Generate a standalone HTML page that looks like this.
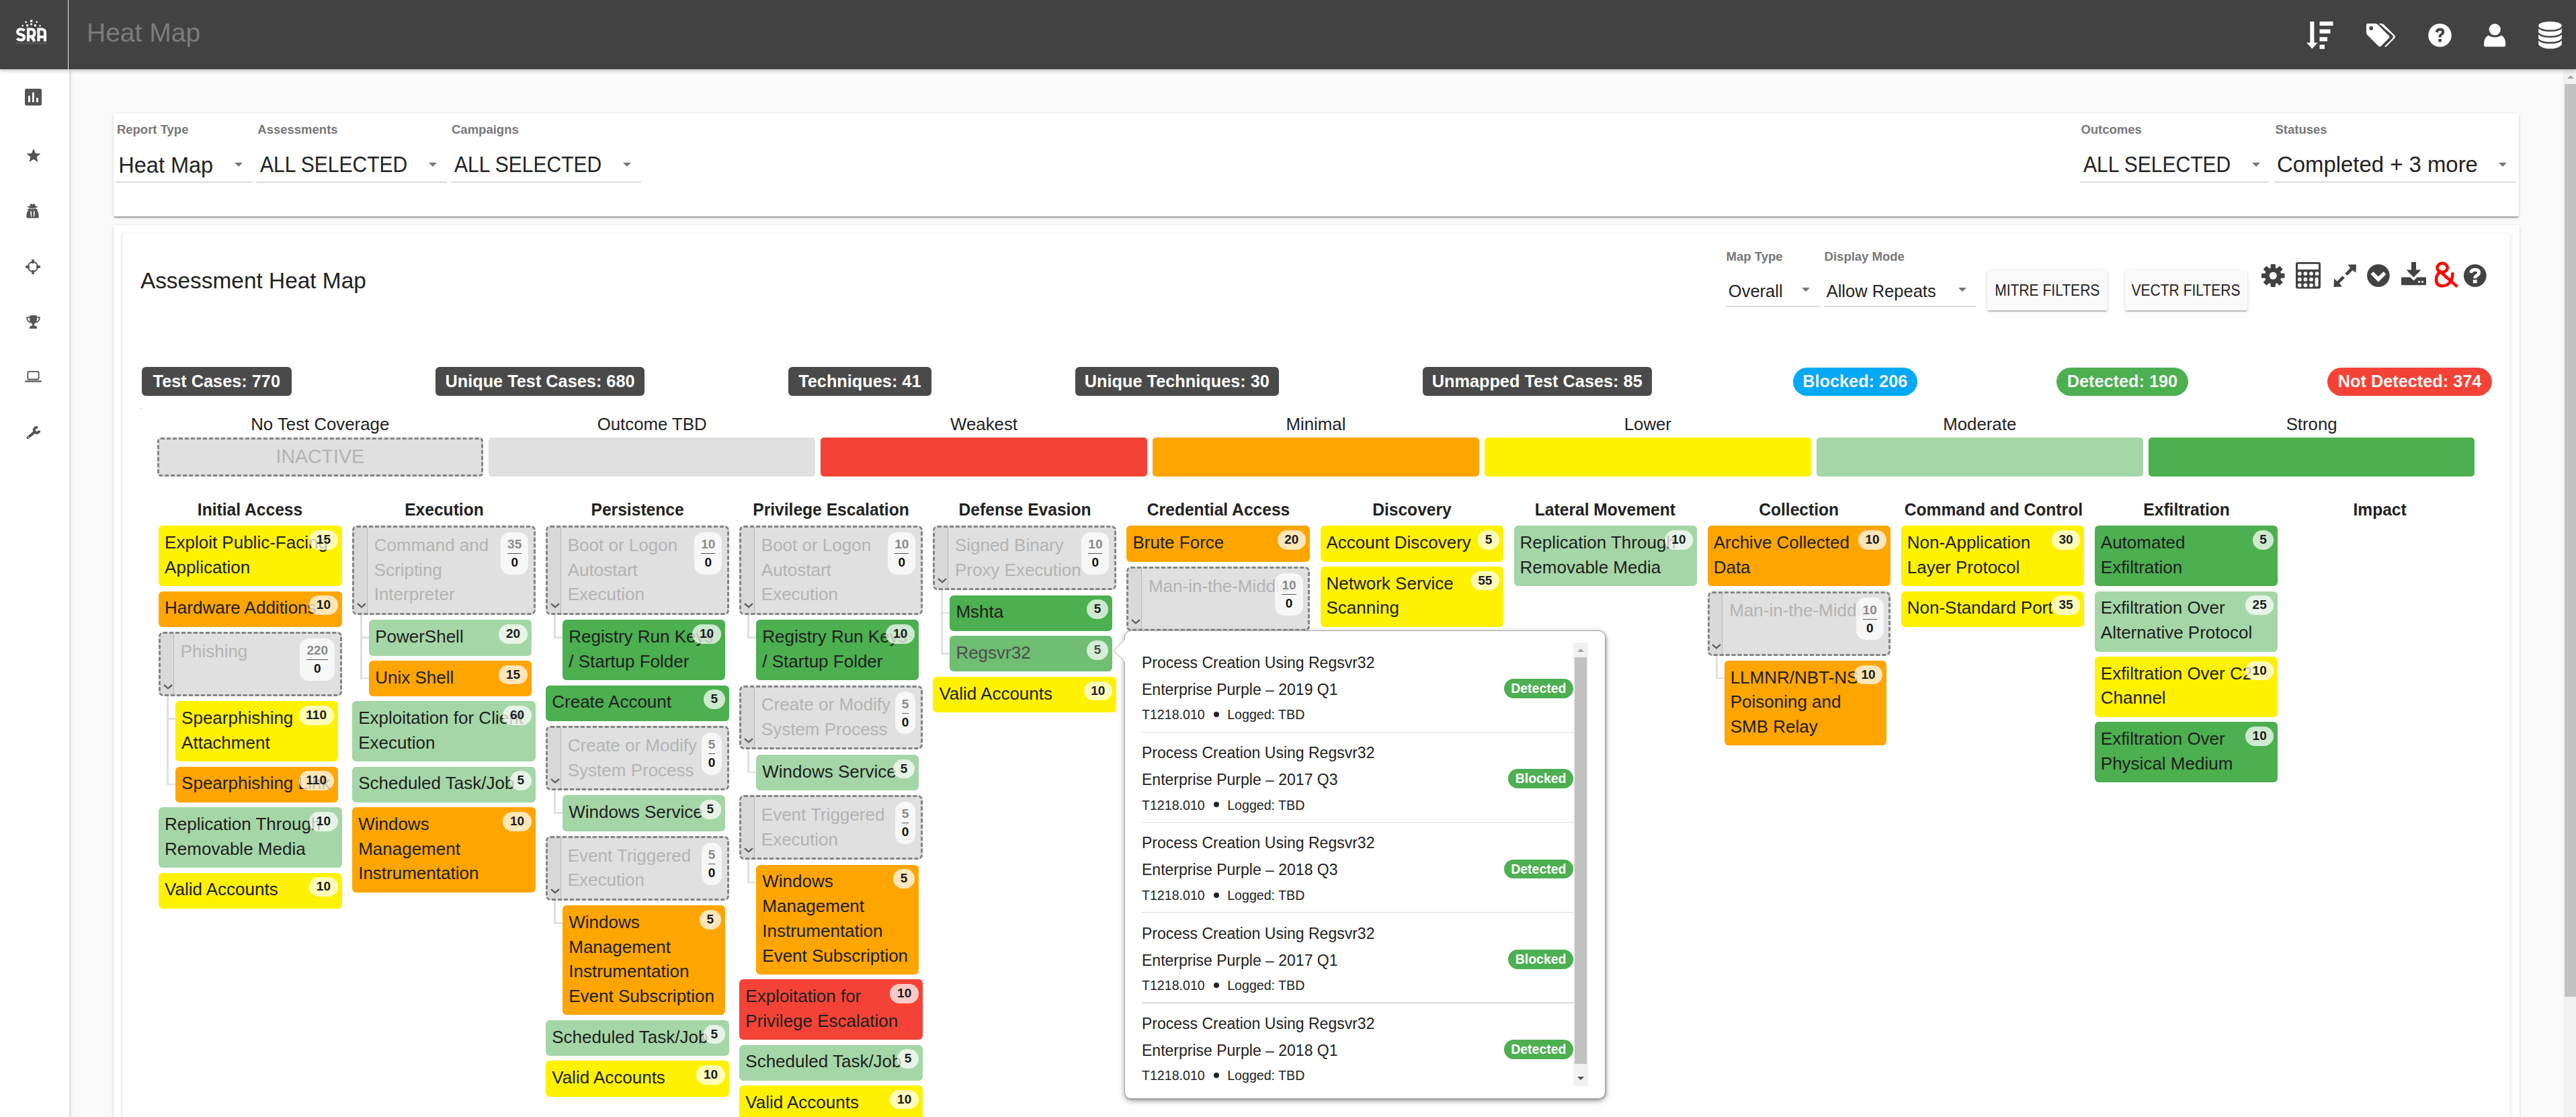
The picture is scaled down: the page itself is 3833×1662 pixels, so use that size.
<!DOCTYPE html><html><head><meta charset="utf-8"><title>Heat Map</title><style>
*{margin:0;padding:0;box-sizing:border-box}
html,body{width:3833px;height:1662px;overflow:hidden;background:#fafafa;font-family:"Liberation Sans",sans-serif;color:#212121}
.abs{position:absolute}
#hdr{position:absolute;left:0;top:0;width:3833px;height:102.5px;background:#424242;z-index:5;box-shadow:0 2px 6px rgba(0,0,0,.25)}
#logo{position:absolute;left:0;top:0;width:102px;height:102.5px;border-right:1.5px solid #e8e8e8}
#title{position:absolute;left:129px;top:-1.7px;line-height:102.5px;font-size:39px;color:#7c7c7c}
#side{position:absolute;left:0;top:102.5px;width:103px;height:1560px;background:#fff;box-shadow:1px 0 5px rgba(0,0,0,.18);z-index:4}
#sb{position:absolute;left:3814px;top:102.5px;width:19px;height:1560px;background:#f1f1f1;z-index:3}
#sbt{position:absolute;left:2px;top:22.5px;width:17px;height:1358px;background:#c1c1c1}
.card{position:absolute;background:#fff;border-radius:3px;box-shadow:0 3px 1.6px -1.6px rgba(0,0,0,.2),0 1.6px 1.6px 0 rgba(0,0,0,.14),0 1.6px 5px 0 rgba(0,0,0,.12)}
.lbl{position:absolute;font-size:18.5px;font-weight:bold;color:#777;white-space:nowrap}
.sel{position:absolute;white-space:nowrap;color:#222}
.ul{position:absolute;height:2px;background:#dcdcdc}
.arr{position:absolute;width:0;height:0;border-left:6px solid transparent;border-right:6px solid transparent;border-top:6.8px solid #757575}
.btn{position:absolute;background:#fafafa;border-radius:3px;box-shadow:0 3px 1px -2px rgba(0,0,0,.2),0 2px 2px 0 rgba(0,0,0,.14),0 1px 5px 0 rgba(0,0,0,.12);font-size:23.5px;color:#222;text-align:center;white-space:nowrap}
.stat{position:absolute;top:546px;height:43.3px;line-height:43.3px;border-radius:6px;background:#4a4a4a;color:#fff;font-weight:bold;font-size:25.3px;text-align:center;white-space:nowrap}
.pill{position:absolute;top:547px;height:41.5px;line-height:41.5px;border-radius:21px;color:#f3f3f3;font-weight:bold;font-size:25.3px;text-align:center;white-space:nowrap}
.lg{position:absolute;top:617px;font-size:25.8px;color:#222;text-align:center;white-space:nowrap;width:485.5px}
.lb{position:absolute;top:651.2px;height:57.4px;width:485.5px;border-radius:5px}
.ch{position:absolute;top:744px;font-size:25.5px;font-weight:bold;color:#222;text-align:center;white-space:nowrap}
.ch span{display:inline-block;transform:scaleX(.965)}
.c{position:absolute;border-radius:6px;padding:6.8px 0 0 9px;line-height:36.7px;font-size:26px;color:#1e1e1e;white-space:nowrap;overflow:hidden}
.c .b{position:absolute;top:6.8px;right:6.1px;height:28.6px;line-height:28.6px;padding:0 10.6px;border-radius:14.3px;background:rgba(255,255,255,.72);font-size:19px;font-weight:bold;color:#1a1a1a}
.hv{opacity:.8}
.ci{position:absolute;border:3px dashed #838383;border-radius:7px;background:#e0e0e0;line-height:36.7px;font-size:26px;color:#b3b3b3;white-space:nowrap;overflow:hidden}
.ci .st{position:absolute;left:0;top:0;bottom:0;width:19.5px;background:#d9d9d9;border-right:1.2px solid #b8b8b8}
.ci .chev{position:absolute;left:3.5px;bottom:6.8px}
.ci .t{position:absolute;left:29.5px;top:7.7px}
.fr{position:absolute;top:6.6px;right:7.5px;height:63px;padding:0 10px;border-radius:14px;background:rgba(255,255,255,.72);text-align:center;display:flex;flex-direction:column;align-items:center}
.fa{display:block;font-size:19px;font-weight:bold;color:#8a8a8a;line-height:19px;margin-top:8.4px;padding-bottom:4px;border-bottom:1.3px solid #555}
.fb{display:block;font-size:19px;font-weight:bold;color:#111;line-height:19px;margin-top:3px}
.tv{position:absolute;width:3px;background:#e0e0e0}
.th{position:absolute;width:13px;height:2.6px;background:#e0e0e0}
#pop{position:absolute;left:1672.5px;top:938.3px;width:716px;height:696.8px;background:#fff;border:1px solid #ababab;border-radius:10px;box-shadow:0 3px 8px rgba(0,0,0,.38),1px 1px 3px rgba(0,0,0,.25);z-index:6;font-family:"Liberation Sans",sans-serif}
#parr{position:absolute;left:1656px;top:951.5px;width:17.5px;height:32px;z-index:7}
.pi{position:absolute;left:25.5px;width:643px;color:#222}
.pt{position:absolute;left:0;font-size:23px;white-space:nowrap}
.ps{position:absolute;left:0;font-size:19.6px;white-space:nowrap}
.bul{display:inline-block;width:8px;height:8px;border-radius:4px;background:#222;margin:0 12.5px 0 13px;vertical-align:middle;position:relative;top:-2px}
.pb{position:absolute;right:0;height:28.7px;line-height:28.7px;padding:0 10.5px;border-radius:14.4px;background:#4caf50;color:#fff;font-weight:bold;font-size:19.5px}
.psep{position:absolute;left:0;width:643px;height:1.3px;background:#dcdcdc}
</style></head><body><div id="hdr"><div id="logo"><svg class="abs" style="left:18px;top:24px" width="60" height="48" viewBox="0 0 60 48">
<g fill="#fff">
<rect x="26.9" y="5.6" width="3.4" height="3.4"/>
<circle cx="20.6" cy="8.8" r="1.4"/><circle cx="36.7" cy="8.8" r="1.4"/>
<circle cx="15.7" cy="14.2" r="1.25"/><circle cx="41.5" cy="14.2" r="1.25"/>
<rect x="21" y="12.2" width="3.2" height="3.2" rx=".6"/><rect x="32.8" y="12.2" width="3.2" height="3.2" rx=".6"/>
<rect x="27.2" y="10.6" width="2.8" height="2.8" rx=".6"/>
</g>
<g fill="none" stroke="#fff" stroke-width="4.2">
<path d="M18.3 21.6 Q16.6 19.5 13 19.5 Q8.2 19.5 8.2 23.4 Q8.2 26.4 13 27.4 Q18 28.4 18 31.6 Q18 35.5 13 35.5 Q9.4 35.5 7.4 33.2"/>
<path d="M24 37.6 L24 19.5 L28.8 19.5 Q33.3 19.5 33.3 24.9 Q33.3 30.3 28.8 30.3 L24 30.3"/>
<path d="M29.2 30.4 L33.4 37.6" stroke-width="4.6"/>
<path d="M39.4 37.6 L39.4 19.5 L44.2 19.5 Q49 19.5 49 25 L49 37.6 M39.4 31 L49 31"/>
</g>
<line x1="6.5" y1="40.4" x2="51" y2="40.4" stroke="#d0d0d0" stroke-width="1.6" stroke-dasharray="1.6 1.1" opacity=".35"/>
</svg></div><div id="title">Heat Map</div><svg class="abs" style="left:3432px;top:31.6px" width="40" height="41" viewBox="0 0 40 41">
<rect x="5.3" y="0" width="6.1" height="32" fill="#fff"/><path d="M0 31.4 L16.7 31.4 L8.35 40.4 Z" fill="#fff"/>
<rect x="19.5" y="0" width="20" height="6.2" fill="#fff"/>
<rect x="19.5" y="11.6" width="16" height="6.2" fill="#fff"/>
<rect x="19.5" y="23.2" width="11.5" height="6.2" fill="#fff"/>
<rect x="19.5" y="34.6" width="7.5" height="6.2" fill="#fff"/></svg><svg class="abs" style="left:3520.5px;top:34.5px" width="43" height="35" viewBox="0 0 43 35">
<path d="M0 2.5 Q0 0 2.5 0 L13.5 0 Q15.5 0 17 1.5 L33.5 18 Q35.5 20 33.5 22 L22 33.5 Q20 35.5 18 33.5 L1.5 17 Q0 15.5 0 13.5 Z" fill="#fff"/>
<circle cx="7.2" cy="7" r="2.9" fill="#424242"/>
<path d="M18.5 0 L22.5 0 Q24.5 0 26 1.5 L42 17.5 Q44 19.8 42 22 L29.5 34.5 L26.5 34.5 L39 22 Q41 19.8 39 17.5 Z" fill="#fff"/></svg><svg class="abs" style="left:3612.5px;top:34.5px" width="35" height="35" viewBox="0 0 35 35">
<circle cx="17.5" cy="17.5" r="17.3" fill="#fff"/>
<path d="M10.8 12.6 Q11.5 6.8 17.8 6.8 Q24.2 6.8 24.2 12.4 Q24.2 15.6 21 17.3 Q19.6 18.1 19.6 19.6 L19.6 20.6 L15.5 20.6 L15.5 19.2 Q15.5 16.4 18.3 15 Q20.2 14 20.2 12.6 Q20.2 10.7 17.7 10.7 Q15.2 10.7 14.6 13.7 Z" fill="#424242"/>
<rect x="15.3" y="23" width="4.6" height="4.4" fill="#424242"/></svg><svg class="abs" style="left:3695.5px;top:34.5px" width="33" height="35" viewBox="0 0 33 35">
<circle cx="16.2" cy="8.8" r="8.6" fill="#fff"/>
<path d="M0 30 Q0 21.5 6.5 17.5 Q10.5 20.5 16.2 20.5 Q22 20.5 26 17.5 Q32.2 21.5 32.2 30 L32.2 32 Q32.2 34.5 29.5 34.5 L2.7 34.5 Q0 34.5 0 32 Z" fill="#fff"/></svg><svg class="abs" style="left:3776.5px;top:31.6px" width="35" height="41" viewBox="0 0 35 41">
<ellipse cx="17.5" cy="6.3" rx="17.3" ry="6.3" fill="#fff"/>
<path d="M0.2 10.5 Q5 15 17.5 15 Q30 15 34.8 10.5 L34.8 16.2 Q30 21.5 17.5 21.5 Q5 21.5 0.2 16.2 Z" fill="#fff"/>
<path d="M0.2 19.5 Q5 24 17.5 24 Q30 24 34.8 19.5 L34.8 25.5 Q30 30.5 17.5 30.5 Q5 30.5 0.2 25.5 Z" fill="#fff"/>
<path d="M0.2 28.5 Q5 33 17.5 33 Q30 33 34.8 28.5 L34.8 34.5 Q30 40.6 17.5 40.6 Q5 40.6 0.2 34.5 Z" fill="#fff"/></svg></div><div id="side"></div><div style="position:absolute;left:0;top:0;z-index:4"><svg class="abs" style="left:37px;top:132px" width="25" height="25" viewBox="0 0 25 25">
<rect x="0" y="0" width="25" height="25" rx="2.5" fill="#555"/>
<rect x="5" y="10.5" width="2.8" height="9.5" fill="#fff"/><rect x="11" y="5.5" width="2.8" height="14.5" fill="#fff"/><rect x="17" y="13.5" width="2.8" height="6.5" fill="#fff"/></svg><svg class="abs" style="left:38.5px;top:221px" width="22" height="21" viewBox="0 0 22 21">
<path d="M11 0 L13.9 7.2 L21.6 7.6 L15.6 12.6 L17.6 20.3 L11 16.1 L4.4 20.3 L6.4 12.6 L0.4 7.6 L8.1 7.2 Z" fill="#555"/></svg><svg class="abs" style="left:39px;top:303px" width="19" height="22" viewBox="0 0 19 22">
<path d="M5.1 4.4 L6 1 Q6.4 0 7.4 0.3 L9.5 1 L11.6 0.3 Q12.6 0 13 1 L14.1 4.4 Z" fill="#555"/>
<rect x="2.1" y="3.8" width="14.8" height="2" rx="1" fill="#555"/>
<path d="M4.9 5.6 L14.1 5.6 L14.5 9 L4.5 9 Z" fill="#555"/>
<path d="M6.2 7 L9.1 7 L9.1 8 Q8.6 9 7.5 9 Q6.5 9 6.2 8 Z M12.8 7 L9.9 7 L9.9 8 Q10.4 9 11.5 9 Q12.5 9 12.8 8 Z" fill="#fff"/>
<rect x="2.1" y="8.1" width="14.8" height="1.7" rx="0.85" fill="#555"/>
<path d="M0.4 19.4 Q0.4 12 3.4 9.6 L15.6 9.6 Q18.6 12 18.6 19.4 Q18.6 21.6 16.4 21.6 L2.6 21.6 Q0.4 21.6 0.4 19.4 Z" fill="#555"/>
<path d="M5.9 11.6 L8 11.6 L8.2 19.5 L7 19.5 Z M13 11.6 L10.9 11.6 L10.8 19.5 L12 19.5 Z" fill="#fff"/></svg><svg class="abs" style="left:38.4px;top:385.7px" width="22" height="22" viewBox="0 0 22 22">
<circle cx="11" cy="11" r="7.2" fill="none" stroke="#555" stroke-width="1.9"/>
<rect x="9.2" y="0" width="3.6" height="6" fill="#555"/><rect x="9.2" y="16" width="3.6" height="6" fill="#555"/>
<rect x="0" y="9.2" width="6" height="3.6" fill="#555"/><rect x="16" y="9.2" width="6" height="3.6" fill="#555"/></svg><svg class="abs" style="left:39px;top:468.6px" width="21" height="20" viewBox="0 0 21 20">
<path d="M5.2 0.2 H15.8 V6.5 Q15.8 11.5 11.9 13 V15.8 H13.5 Q16 16 16 18 V20 H5 V18 Q5 16 7.5 15.8 H9.1 V13 Q5.2 11.5 5.2 6.5 Z" fill="#555"/>
<path d="M5.4 3.4 H1.2 Q1 9 6 10.6 M15.6 3.4 H19.8 Q20 9 15 10.6" fill="none" stroke="#555" stroke-width="1.9"/></svg><svg class="abs" style="left:37.2px;top:552px" width="25" height="17" viewBox="0 0 25 17">
<rect x="4.4" y="0.9" width="16.2" height="11.6" rx="1.4" fill="none" stroke="#555" stroke-width="1.8"/>
<path d="M0 14.2 H24.8 V15.3 Q24.8 16.6 23.5 16.6 H1.3 Q0 16.6 0 15.3 Z" fill="#555"/></svg><svg class="abs" style="left:39px;top:633px" width="21" height="21" viewBox="0 0 21 21">
<path d="M19.64 7.69 A4 4 0 1 1 17.07 3.24" fill="none" stroke="#555" stroke-width="3.9"/>
<path d="M2.6 18 L12.8 9.6" stroke="#555" stroke-width="4.2" stroke-linecap="round"/>
<circle cx="3.4" cy="17.3" r="0.9" fill="#fff"/></svg></div><div id="sb"><div id="sbt"></div><div style="position:absolute;left:6.2px;top:9px;width:0;height:0;border-left:5px solid transparent;border-right:5px solid transparent;border-bottom:5.5px solid #a3a3a3"></div></div><div class="card" style="left:169px;top:169.3px;width:3579px;height:152.5px"></div><div class="lbl" style="left:173.9px;top:183.34px;font-size:18.5px;line-height:20.68px">Report Type</div><div class="lbl" style="left:383.3px;top:183.34px;font-size:18.5px;line-height:20.68px">Assessments</div><div class="lbl" style="left:672px;top:183.34px;font-size:18.5px;line-height:20.68px">Campaigns</div><div class="lbl" style="left:3096.4px;top:183.34px;font-size:18.5px;line-height:20.68px">Outcomes</div><div class="lbl" style="left:3385.5px;top:183.34px;font-size:18.5px;line-height:20.68px">Statuses</div><div class="sel" style="left:176.3px;top:227.75px;font-size:32.5px;line-height:36.34px;height:36.34px;transform:scaleX(1);transform-origin:0 0">Heat Map</div><div class="ul" style="left:172px;top:270px;width:203.8px"></div><div class="arr" style="left:348.7px;top:242px"></div><div class="sel" style="left:386.6px;top:227.3px;font-size:33px;line-height:36.89px;height:36.89px;transform:scaleX(0.91);transform-origin:0 0">ALL SELECTED</div><div class="ul" style="left:382.4px;top:270px;width:282.3px"></div><div class="arr" style="left:637.5px;top:242px"></div><div class="sel" style="left:675.6px;top:227.3px;font-size:33px;line-height:36.89px;height:36.89px;transform:scaleX(0.91);transform-origin:0 0">ALL SELECTED</div><div class="ul" style="left:671px;top:270px;width:283px"></div><div class="arr" style="left:927.4px;top:242px"></div><div class="sel" style="left:3099.5px;top:227.3px;font-size:33px;line-height:36.89px;height:36.89px;transform:scaleX(0.91);transform-origin:0 0">ALL SELECTED</div><div class="ul" style="left:3094.8px;top:270px;width:282px"></div><div class="arr" style="left:3350.7px;top:242px"></div><div class="sel" style="left:3388px;top:227.39px;font-size:32.9px;line-height:36.78px;height:36.78px;transform:scaleX(1);transform-origin:0 0">Completed + 3 more</div><div class="ul" style="left:3383.9px;top:270px;width:359.9px"></div><div class="arr" style="left:3717.8px;top:242px"></div><div class="card" style="left:169px;top:335.4px;width:3580px;height:1400px"></div><div class="card" style="left:181.5px;top:348px;width:3553px;height:1400px"></div><div class="abs" style="left:208.9px;top:399.41px;font-size:33.4px;line-height:38px;color:#212121;white-space:nowrap">Assessment Heat Map</div><div class="lbl" style="left:2568.6px;top:371.64px;font-size:18.5px;line-height:20.68px">Map Type</div><div class="lbl" style="left:2714.6px;top:371.64px;font-size:18.5px;line-height:20.68px">Display Mode</div><div class="sel" style="left:2571.8px;top:418.9px;font-size:25.5px;line-height:28.51px;height:28.51px;transform:scaleX(1);transform-origin:0 0">Overall</div><div class="ul" style="left:2567px;top:455px;width:140px"></div><div class="arr" style="left:2681px;top:427.6px"></div><div class="sel" style="left:2717.7px;top:418.9px;font-size:25.5px;line-height:28.51px;height:28.51px;transform:scaleX(1);transform-origin:0 0">Allow Repeats</div><div class="ul" style="left:2714px;top:455px;width:225.6px"></div><div class="arr" style="left:2914px;top:427.6px"></div><div class="btn" style="left:2957px;top:402px;width:179px;height:60px;line-height:60px"><span style="display:inline-block;transform:scaleX(.895)">MITRE FILTERS</span></div><div class="btn" style="left:3162px;top:402px;width:182px;height:60px;line-height:60px"><span style="display:inline-block;transform:scaleX(.895)">VECTR FILTERS</span></div><svg class="abs" style="left:3365px;top:392.7px" width="34.5" height="34.5" viewBox="0 0 34.5 34.5">
<g transform="translate(17.25 17.25)" fill="#424242">
<circle r="12.3"/>
<rect x="-3.6" y="-17.25" width="7.2" height="8" rx="1" transform="rotate(0)"/><rect x="-3.6" y="-17.25" width="7.2" height="8" rx="1" transform="rotate(45)"/><rect x="-3.6" y="-17.25" width="7.2" height="8" rx="1" transform="rotate(90)"/><rect x="-3.6" y="-17.25" width="7.2" height="8" rx="1" transform="rotate(135)"/><rect x="-3.6" y="-17.25" width="7.2" height="8" rx="1" transform="rotate(180)"/><rect x="-3.6" y="-17.25" width="7.2" height="8" rx="1" transform="rotate(225)"/><rect x="-3.6" y="-17.25" width="7.2" height="8" rx="1" transform="rotate(270)"/><rect x="-3.6" y="-17.25" width="7.2" height="8" rx="1" transform="rotate(315)"/>
</g><circle cx="17.25" cy="17.25" r="5.5" fill="#fff"/></svg><svg class="abs" style="left:3416px;top:390px" width="37" height="39.5" viewBox="0 0 37 39.5">
<rect x="0" y="0" width="37" height="39.5" rx="3" fill="#424242"/>
<rect x="3" y="2.8" width="31" height="8.2" fill="#fff"/><circle cx="5.8" cy="17.1" r="2.9" fill="#fff"/><circle cx="14.4" cy="17.1" r="2.9" fill="#fff"/><circle cx="23.0" cy="17.1" r="2.9" fill="#fff"/><circle cx="31.6" cy="17.1" r="2.9" fill="#fff"/><circle cx="5.8" cy="25.7" r="2.9" fill="#fff"/><circle cx="14.4" cy="25.7" r="2.9" fill="#fff"/><circle cx="23.0" cy="25.7" r="2.9" fill="#fff"/><circle cx="5.8" cy="34.3" r="2.9" fill="#fff"/><circle cx="14.4" cy="34.3" r="2.9" fill="#fff"/><circle cx="23.0" cy="34.3" r="2.9" fill="#fff"/>
<rect x="28.6" y="22.6" width="5" height="14" rx="2.5" fill="#fff"/></svg><svg class="abs" style="left:3471.8px;top:392.7px" width="34.5" height="34.5" viewBox="0 0 34.5 34.5">
<path d="M21.4 0.8 L33.9 0.4 L33.5 12.7 L28.6 8.9 L20.5 16.9 L17.4 13.8 L25.3 5.8 Z" fill="#424242"/>
<path d="M1 21.6 L5.6 25.4 L13.6 17.4 L16.8 20.6 L8.9 28.6 L12.9 33.6 L0.5 34 Z" fill="#424242"/></svg><svg class="abs" style="left:3522.4px;top:392.7px" width="34.2" height="34.2" viewBox="0 0 34.2 34.2">
<circle cx="16.9" cy="17.1" r="16.9" fill="#424242"/>
<path d="M5.4 15.1 L9.3 11.2 L16.9 18.4 L24.6 11.2 L28.5 15.1 L16.9 26.6 Z" fill="#fff"/></svg><svg class="abs" style="left:3573px;top:390px" width="37" height="34.5" viewBox="0 0 37 34.5">
<path d="M15 0 L22 0 L22 11.5 L29.4 11.5 L18.5 22.8 L7.6 11.5 L15 11.5 Z" fill="#424242"/>
<path d="M0 24 Q0 22.6 1.4 22.6 L13.3 22.6 L18.5 27.6 L23.7 22.6 L35.6 22.6 Q37 22.6 37 24 L37 32.7 Q37 34.3 35.4 34.3 L1.6 34.3 Q0 34.3 0 32.7 Z" fill="#424242"/>
<circle cx="26.6" cy="29.2" r="1.5" fill="#fff"/><circle cx="31.6" cy="29.2" r="1.5" fill="#fff"/></svg><svg class="abs" style="left:3620px;top:389px" width="40" height="41" viewBox="0 0 40 41">
<g fill="none" stroke="#ff0000" stroke-width="4.5">
<ellipse cx="14.1" cy="9.4" rx="7.6" ry="6.6"/>
<path d="M11.2 15.4 L36.4 37.6"/>
<path d="M10.8 15.4 Q5 19.5 5 27.5 Q5 36.4 14.2 36.4 Q21.5 36.4 26.3 30"/>
<path d="M29.5 16.4 Q29.5 25 25.8 31"/>
</g></svg><svg class="abs" style="left:3666px;top:392.7px" width="34" height="34" viewBox="0 0 34 34">
<circle cx="16.8" cy="17.1" r="16.9" fill="#424242"/>
<path d="M10.2 12.8 Q11.8 8.3 16.8 8.3 Q22.5 8.3 22.5 12.6 Q22.5 15.4 19.6 16.9 Q16.8 18.4 16.8 20.6 L16.8 21.2" fill="none" stroke="#fff" stroke-width="5"/>
<rect x="13.8" y="23.3" width="5.9" height="5" fill="#fff"/></svg><div class="stat" style="left:210.9px;width:222.8px">Test Cases: 770</div><div class="stat" style="left:648px;width:311px">Unique Test Cases: 680</div><div class="stat" style="left:1172.8px;width:213.1px">Techniques: 41</div><div class="stat" style="left:1600px;width:302.7px">Unique Techniques: 30</div><div class="stat" style="left:2116.8px;width:340.8px">Unmapped Test Cases: 85</div><div class="pill" style="left:2667.8px;width:184.9px;background:#03a9f4">Blocked: 206</div><div class="pill" style="left:3060px;width:195.9px;background:#4caf50">Detected: 190</div><div class="pill" style="left:3462.8px;width:245.6px;background:#f44336">Not Detected: 374</div><div class="abs" style="left:208px;top:606.5px;width:4px;height:1.2px;background:#ddd"></div><div class="lg" style="left:233.5px">No Test Coverage</div><div class="lb" style="left:233.5px;background:#e0e0e0;border:3px dashed #838383;font-size:30px;color:#b3b3b3;text-align:center;line-height:50px"><span style="display:inline-block;transform:scaleX(.95)">INACTIVE</span></div><div class="lg" style="left:727.4px">Outcome TBD</div><div class="lb" style="left:727.4px;background:#e0e0e0"></div><div class="lg" style="left:1221.3px">Weakest</div><div class="lb" style="left:1221.3px;background:#f44336"></div><div class="lg" style="left:1715.2px">Minimal</div><div class="lb" style="left:1715.2px;background:#ffa500"></div><div class="lg" style="left:2209.1px">Lower</div><div class="lb" style="left:2209.1px;background:#fff200"></div><div class="lg" style="left:2703px">Moderate</div><div class="lb" style="left:2703px;background:#a5d6a7"></div><div class="lg" style="left:3196.9px">Strong</div><div class="lb" style="left:3196.9px;background:#4caf50"></div><div class="ch" style="left:236.1px;width:272.6px"><span>Initial Access</span></div>
<div class="c" style="left:236.1px;top:782.4px;width:272.6px;height:89.9px;background:#fff200"><div class="t">Exploit Public-Facing<br>Application</div><span class="b">15</span></div>
<div class="c" style="left:236.1px;top:879.65px;width:272.6px;height:53.2px;background:#ffa500"><div class="t">Hardware Additions</div><span class="b">10</span></div>
<div class="ci" style="left:236.1px;top:940.2px;width:272.6px;height:95.9px"><div class="st"><svg class="chev" width="14" height="8" viewBox="0 0 14 8"><path d="M1 1.2 L7 6.4 L13 1.2" fill="none" stroke="#5a5a5a" stroke-width="2.2"/></svg></div><div class="t">Phishing</div><span class="fr"><span class="fa">220</span><span class="fb">0</span></span></div>
<div class="c" style="left:261.1px;top:1043.45px;width:241.6px;height:89.9px;background:#fff200"><div class="t">Spearphishing<br>Attachment</div><span class="b">110</span></div>
<div class="c" style="left:261.1px;top:1140.7px;width:241.6px;height:53.2px;background:#ffa500"><div class="t">Spearphishing Link</div><span class="b">110</span></div>
<div class="tv" style="left:248.2px;top:1036.1px;height:132.2px"></div>
<div class="th" style="left:248.2px;top:1068.45px"></div>
<div class="th" style="left:248.2px;top:1165.7px"></div>
<div class="c" style="left:236.1px;top:1201.25px;width:272.6px;height:89.9px;background:#a5d6a7"><div class="t">Replication Through<br>Removable Media</div><span class="b">10</span></div>
<div class="c" style="left:236.1px;top:1298.5px;width:272.6px;height:53.2px;background:#fff200"><div class="t">Valid Accounts</div><span class="b">10</span></div>
<div class="ch" style="left:524.17px;width:272.6px"><span>Execution</span></div>
<div class="ci" style="left:524.17px;top:782.4px;width:272.6px;height:132.6px"><div class="st"><svg class="chev" width="14" height="8" viewBox="0 0 14 8"><path d="M1 1.2 L7 6.4 L13 1.2" fill="none" stroke="#5a5a5a" stroke-width="2.2"/></svg></div><div class="t">Command and<br>Scripting<br>Interpreter</div><span class="fr"><span class="fa">35</span><span class="fb">0</span></span></div>
<div class="c" style="left:549.17px;top:922.35px;width:241.6px;height:53.2px;background:#a5d6a7"><div class="t">PowerShell</div><span class="b">20</span></div>
<div class="c" style="left:549.17px;top:982.9px;width:241.6px;height:53.2px;background:#ffa500"><div class="t">Unix Shell</div><span class="b">15</span></div>
<div class="tv" style="left:536.27px;top:915px;height:95.5px"></div>
<div class="th" style="left:536.27px;top:947.35px"></div>
<div class="th" style="left:536.27px;top:1007.9px"></div>
<div class="c" style="left:524.17px;top:1043.45px;width:272.6px;height:89.9px;background:#a5d6a7"><div class="t">Exploitation for Client<br>Execution</div><span class="b">60</span></div>
<div class="c" style="left:524.17px;top:1140.7px;width:272.6px;height:53.2px;background:#a5d6a7"><div class="t">Scheduled Task/Job</div><span class="b">5</span></div>
<div class="c" style="left:524.17px;top:1201.25px;width:272.6px;height:126.6px;background:#ffa500"><div class="t">Windows<br>Management<br>Instrumentation</div><span class="b">10</span></div>
<div class="ch" style="left:812.24px;width:272.6px"><span>Persistence</span></div>
<div class="ci" style="left:812.24px;top:782.4px;width:272.6px;height:132.6px"><div class="st"><svg class="chev" width="14" height="8" viewBox="0 0 14 8"><path d="M1 1.2 L7 6.4 L13 1.2" fill="none" stroke="#5a5a5a" stroke-width="2.2"/></svg></div><div class="t">Boot or Logon<br>Autostart<br>Execution</div><span class="fr"><span class="fa">10</span><span class="fb">0</span></span></div>
<div class="c" style="left:837.24px;top:922.35px;width:241.6px;height:89.9px;background:#4caf50"><div class="t">Registry Run Keys<br>/ Startup Folder</div><span class="b">10</span></div>
<div class="tv" style="left:824.34px;top:915px;height:34.95px"></div>
<div class="th" style="left:824.34px;top:947.35px"></div>
<div class="c" style="left:812.24px;top:1019.6px;width:272.6px;height:53.2px;background:#4caf50"><div class="t">Create Account</div><span class="b">5</span></div>
<div class="ci" style="left:812.24px;top:1080.15px;width:272.6px;height:95.9px"><div class="st"><svg class="chev" width="14" height="8" viewBox="0 0 14 8"><path d="M1 1.2 L7 6.4 L13 1.2" fill="none" stroke="#5a5a5a" stroke-width="2.2"/></svg></div><div class="t">Create or Modify<br>System Process</div><span class="fr"><span class="fa">5</span><span class="fb">0</span></span></div>
<div class="c" style="left:837.24px;top:1183.4px;width:241.6px;height:53.2px;background:#a5d6a7"><div class="t">Windows Service</div><span class="b">5</span></div>
<div class="tv" style="left:824.34px;top:1176.05px;height:34.95px"></div>
<div class="th" style="left:824.34px;top:1208.4px"></div>
<div class="ci" style="left:812.24px;top:1243.95px;width:272.6px;height:95.9px"><div class="st"><svg class="chev" width="14" height="8" viewBox="0 0 14 8"><path d="M1 1.2 L7 6.4 L13 1.2" fill="none" stroke="#5a5a5a" stroke-width="2.2"/></svg></div><div class="t">Event Triggered<br>Execution</div><span class="fr"><span class="fa">5</span><span class="fb">0</span></span></div>
<div class="c" style="left:837.24px;top:1347.2px;width:241.6px;height:163.3px;background:#ffa500"><div class="t">Windows<br>Management<br>Instrumentation<br>Event Subscription</div><span class="b">5</span></div>
<div class="tv" style="left:824.34px;top:1339.85px;height:34.95px"></div>
<div class="th" style="left:824.34px;top:1372.2px"></div>
<div class="c" style="left:812.24px;top:1517.85px;width:272.6px;height:53.2px;background:#a5d6a7"><div class="t">Scheduled Task/Job</div><span class="b">5</span></div>
<div class="c" style="left:812.24px;top:1578.4px;width:272.6px;height:53.2px;background:#fff200"><div class="t">Valid Accounts</div><span class="b">10</span></div>
<div class="ch" style="left:1100.31px;width:272.6px"><span>Privilege Escalation</span></div>
<div class="ci" style="left:1100.31px;top:782.4px;width:272.6px;height:132.6px"><div class="st"><svg class="chev" width="14" height="8" viewBox="0 0 14 8"><path d="M1 1.2 L7 6.4 L13 1.2" fill="none" stroke="#5a5a5a" stroke-width="2.2"/></svg></div><div class="t">Boot or Logon<br>Autostart<br>Execution</div><span class="fr"><span class="fa">10</span><span class="fb">0</span></span></div>
<div class="c" style="left:1125.31px;top:922.35px;width:241.6px;height:89.9px;background:#4caf50"><div class="t">Registry Run Keys<br>/ Startup Folder</div><span class="b">10</span></div>
<div class="tv" style="left:1112.41px;top:915px;height:34.95px"></div>
<div class="th" style="left:1112.41px;top:947.35px"></div>
<div class="ci" style="left:1100.31px;top:1019.6px;width:272.6px;height:95.9px"><div class="st"><svg class="chev" width="14" height="8" viewBox="0 0 14 8"><path d="M1 1.2 L7 6.4 L13 1.2" fill="none" stroke="#5a5a5a" stroke-width="2.2"/></svg></div><div class="t">Create or Modify<br>System Process</div><span class="fr"><span class="fa">5</span><span class="fb">0</span></span></div>
<div class="c" style="left:1125.31px;top:1122.85px;width:241.6px;height:53.2px;background:#a5d6a7"><div class="t">Windows Service</div><span class="b">5</span></div>
<div class="tv" style="left:1112.41px;top:1115.5px;height:34.95px"></div>
<div class="th" style="left:1112.41px;top:1147.85px"></div>
<div class="ci" style="left:1100.31px;top:1183.4px;width:272.6px;height:95.9px"><div class="st"><svg class="chev" width="14" height="8" viewBox="0 0 14 8"><path d="M1 1.2 L7 6.4 L13 1.2" fill="none" stroke="#5a5a5a" stroke-width="2.2"/></svg></div><div class="t">Event Triggered<br>Execution</div><span class="fr"><span class="fa">5</span><span class="fb">0</span></span></div>
<div class="c" style="left:1125.31px;top:1286.65px;width:241.6px;height:163.3px;background:#ffa500"><div class="t">Windows<br>Management<br>Instrumentation<br>Event Subscription</div><span class="b">5</span></div>
<div class="tv" style="left:1112.41px;top:1279.3px;height:34.95px"></div>
<div class="th" style="left:1112.41px;top:1311.65px"></div>
<div class="c" style="left:1100.31px;top:1457.3px;width:272.6px;height:89.9px;background:#f44336"><div class="t">Exploitation for<br>Privilege Escalation</div><span class="b">10</span></div>
<div class="c" style="left:1100.31px;top:1554.55px;width:272.6px;height:53.2px;background:#a5d6a7"><div class="t">Scheduled Task/Job</div><span class="b">5</span></div>
<div class="c" style="left:1100.31px;top:1615.1px;width:272.6px;height:53.2px;background:#fff200"><div class="t">Valid Accounts</div><span class="b">10</span></div>
<div class="ch" style="left:1388.38px;width:272.6px"><span>Defense Evasion</span></div>
<div class="ci" style="left:1388.38px;top:782.4px;width:272.6px;height:95.9px"><div class="st"><svg class="chev" width="14" height="8" viewBox="0 0 14 8"><path d="M1 1.2 L7 6.4 L13 1.2" fill="none" stroke="#5a5a5a" stroke-width="2.2"/></svg></div><div class="t">Signed Binary<br>Proxy Execution</div><span class="fr"><span class="fa">10</span><span class="fb">0</span></span></div>
<div class="c" style="left:1413.38px;top:885.65px;width:241.6px;height:53.2px;background:#4caf50"><div class="t">Mshta</div><span class="b">5</span></div>
<div class="c hv" style="left:1413.38px;top:946.2px;width:241.6px;height:53.2px;background:#4caf50"><div class="t">Regsvr32</div><span class="b">5</span></div>
<div class="tv" style="left:1400.48px;top:878.3px;height:95.5px"></div>
<div class="th" style="left:1400.48px;top:910.65px"></div>
<div class="th" style="left:1400.48px;top:971.2px"></div>
<div class="c" style="left:1388.38px;top:1006.75px;width:272.6px;height:53.2px;background:#fff200"><div class="t">Valid Accounts</div><span class="b">10</span></div>
<div class="ch" style="left:1676.45px;width:272.6px"><span>Credential Access</span></div>
<div class="c" style="left:1676.45px;top:782.4px;width:272.6px;height:53.2px;background:#ffa500"><div class="t">Brute Force</div><span class="b">20</span></div>
<div class="ci" style="left:1676.45px;top:842.95px;width:272.6px;height:95.9px"><div class="st"><svg class="chev" width="14" height="8" viewBox="0 0 14 8"><path d="M1 1.2 L7 6.4 L13 1.2" fill="none" stroke="#5a5a5a" stroke-width="2.2"/></svg></div><div class="t">Man-in-the-Middle</div><span class="fr"><span class="fa">10</span><span class="fb">0</span></span></div>
<div class="c" style="left:1701.45px;top:946.2px;width:241.6px;height:126.6px;background:#ffa500"><div class="t">LLMNR/NBT-NS<br>Poisoning and<br>SMB Relay</div><span class="b">10</span></div>
<div class="tv" style="left:1688.55px;top:938.85px;height:34.95px"></div>
<div class="th" style="left:1688.55px;top:971.2px"></div>
<div class="ch" style="left:1964.52px;width:272.6px"><span>Discovery</span></div>
<div class="c" style="left:1964.52px;top:782.4px;width:272.6px;height:53.2px;background:#fff200"><div class="t">Account Discovery</div><span class="b">5</span></div>
<div class="c" style="left:1964.52px;top:842.95px;width:272.6px;height:89.9px;background:#fff200"><div class="t">Network Service<br>Scanning</div><span class="b">55</span></div>
<div class="ch" style="left:2252.59px;width:272.6px"><span>Lateral Movement</span></div>
<div class="c" style="left:2252.59px;top:782.4px;width:272.6px;height:89.9px;background:#a5d6a7"><div class="t">Replication Through<br>Removable Media</div><span class="b">10</span></div>
<div class="ch" style="left:2540.66px;width:272.6px"><span>Collection</span></div>
<div class="c" style="left:2540.66px;top:782.4px;width:272.6px;height:89.9px;background:#ffa500"><div class="t">Archive Collected<br>Data</div><span class="b">10</span></div>
<div class="ci" style="left:2540.66px;top:879.65px;width:272.6px;height:95.9px"><div class="st"><svg class="chev" width="14" height="8" viewBox="0 0 14 8"><path d="M1 1.2 L7 6.4 L13 1.2" fill="none" stroke="#5a5a5a" stroke-width="2.2"/></svg></div><div class="t">Man-in-the-Middle</div><span class="fr"><span class="fa">10</span><span class="fb">0</span></span></div>
<div class="c" style="left:2565.66px;top:982.9px;width:241.6px;height:126.6px;background:#ffa500"><div class="t">LLMNR/NBT-NS<br>Poisoning and<br>SMB Relay</div><span class="b">10</span></div>
<div class="tv" style="left:2552.76px;top:975.55px;height:34.95px"></div>
<div class="th" style="left:2552.76px;top:1007.9px"></div>
<div class="ch" style="left:2828.73px;width:272.6px"><span>Command and Control</span></div>
<div class="c" style="left:2828.73px;top:782.4px;width:272.6px;height:89.9px;background:#fff200"><div class="t">Non-Application<br>Layer Protocol</div><span class="b">30</span></div>
<div class="c" style="left:2828.73px;top:879.65px;width:272.6px;height:53.2px;background:#fff200"><div class="t">Non-Standard Port</div><span class="b">35</span></div>
<div class="ch" style="left:3116.8px;width:272.6px"><span>Exfiltration</span></div>
<div class="c" style="left:3116.8px;top:782.4px;width:272.6px;height:89.9px;background:#4caf50"><div class="t">Automated<br>Exfiltration</div><span class="b">5</span></div>
<div class="c" style="left:3116.8px;top:879.65px;width:272.6px;height:89.9px;background:#a5d6a7"><div class="t">Exfiltration Over<br>Alternative Protocol</div><span class="b">25</span></div>
<div class="c" style="left:3116.8px;top:976.9px;width:272.6px;height:89.9px;background:#fff200"><div class="t">Exfiltration Over C2<br>Channel</div><span class="b">10</span></div>
<div class="c" style="left:3116.8px;top:1074.15px;width:272.6px;height:89.9px;background:#4caf50"><div class="t">Exfiltration Over<br>Physical Medium</div><span class="b">10</span></div>
<div class="ch" style="left:3404.87px;width:272.6px"><span>Impact</span></div>
<svg id="parr" viewBox="0 0 17.5 32"><path d="M17.5 0 L0.5 16 L17.5 32" fill="#fff" stroke="#ababab" stroke-width="1"/><rect x="16.6" y="0" width="2" height="32" fill="#fff"/></svg><div id="pop"><div class="pt" style="left:25.5px;top:33.76px">Process Creation Using Regsvr32</div><div class="pt" style="left:25.5px;top:73.66px">Enterprise Purple &ndash; 2019 Q1</div><div class="ps" style="left:25.5px;top:113.04px">T1218.010<span class="bul"></span>Logged: TBD</div><div class="pb" style="top:71px;right:46.5px">Detected</div><div class="psep" style="left:25.5px;top:149.4px"></div><div class="pt" style="left:25.5px;top:167.96px">Process Creation Using Regsvr32</div><div class="pt" style="left:25.5px;top:207.86px">Enterprise Purple &ndash; 2017 Q3</div><div class="ps" style="left:25.5px;top:247.24px">T1218.010<span class="bul"></span>Logged: TBD</div><div class="pb" style="top:205.2px;right:46.5px">Blocked</div><div class="psep" style="left:25.5px;top:283.6px"></div><div class="pt" style="left:25.5px;top:302.16px">Process Creation Using Regsvr32</div><div class="pt" style="left:25.5px;top:342.06px">Enterprise Purple &ndash; 2018 Q3</div><div class="ps" style="left:25.5px;top:381.44px">T1218.010<span class="bul"></span>Logged: TBD</div><div class="pb" style="top:339.4px;right:46.5px">Detected</div><div class="psep" style="left:25.5px;top:417.8px"></div><div class="pt" style="left:25.5px;top:436.36px">Process Creation Using Regsvr32</div><div class="pt" style="left:25.5px;top:476.26px">Enterprise Purple &ndash; 2017 Q1</div><div class="ps" style="left:25.5px;top:515.64px">T1218.010<span class="bul"></span>Logged: TBD</div><div class="pb" style="top:473.6px;right:46.5px">Blocked</div><div class="psep" style="left:25.5px;top:552px"></div><div class="pt" style="left:25.5px;top:570.56px">Process Creation Using Regsvr32</div><div class="pt" style="left:25.5px;top:610.46px">Enterprise Purple &ndash; 2018 Q1</div><div class="ps" style="left:25.5px;top:649.84px">T1218.010<span class="bul"></span>Logged: TBD</div><div class="pb" style="top:607.8px;right:46.5px">Detected</div><div style="position:absolute;left:667.5px;top:16.7px;width:21.8px;height:660px;background:#f1f1f1"></div><div style="position:absolute;left:669.5px;top:38.7px;width:17.6px;height:605px;background:#c1c1c1"></div><div style="position:absolute;left:673px;top:26px;width:0;height:0;border-left:5px solid transparent;border-right:5px solid transparent;border-bottom:5px solid #a3a3a3"></div><div style="position:absolute;left:673px;top:663px;width:0;height:0;border-left:5px solid transparent;border-right:5px solid transparent;border-top:5px solid #505050"></div></div></body></html>
